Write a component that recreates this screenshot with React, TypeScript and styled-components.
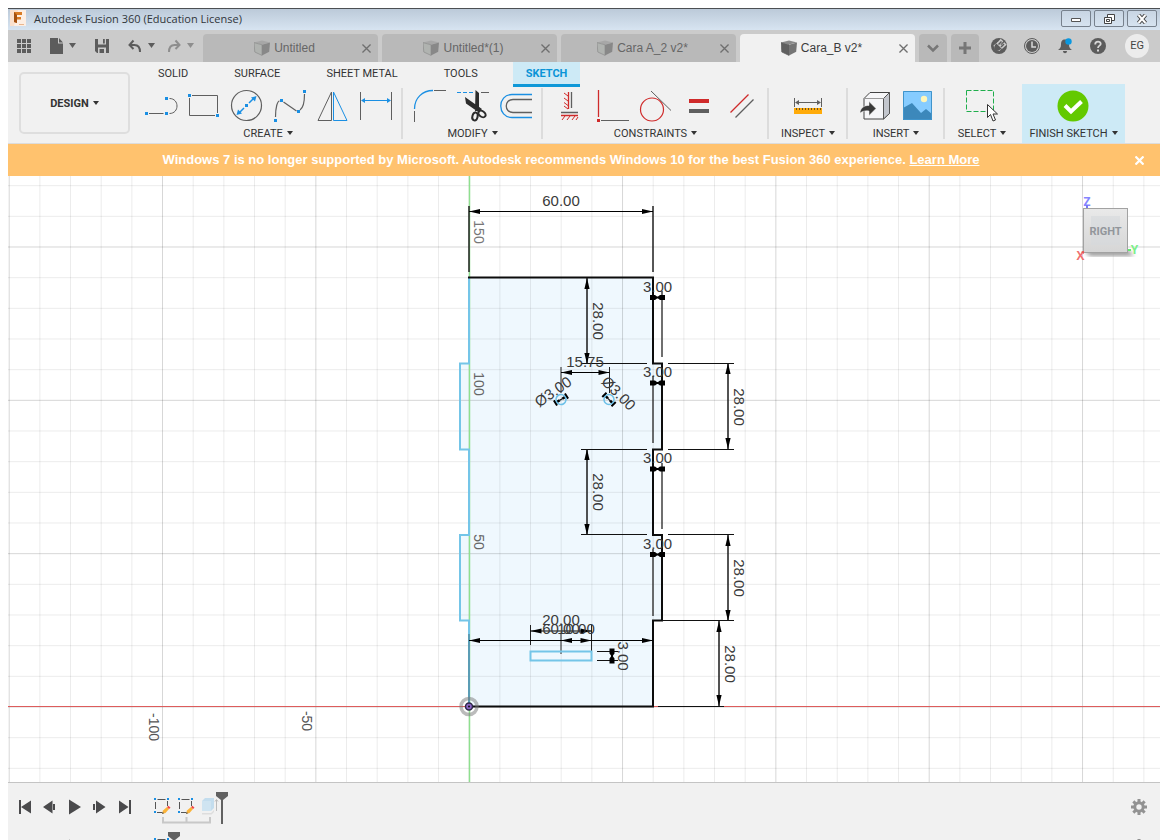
import React from 'react';
import styled, { createGlobalStyle } from 'styled-components';

const GlobalStyle = createGlobalStyle`
  *, *::before, *::after { box-sizing: border-box; }
  body { margin: 0; background: #fff; font-family: Roboto, "Liberation Sans", sans-serif; }
  button { font: inherit; color: inherit; background: none; border: 0; padding: 0; margin: 0; cursor: pointer; }
  svg { display: block; flex: none; }
`;

const Shell = styled.div`
  display: flex;
  flex-direction: column;
  height: 100vh;
  min-height: 640px;
  padding: 8px 8px 0;
`;

/* ---------- title bar ---------- */

const TitleBar = styled.header`
  display: flex;
  align-items: flex-start;
  gap: 8px;
  height: 22px;
  padding: 1px 3px 0 2px;
  border-top: 1px solid #4c4f53;
  background: linear-gradient(#bccad9, #d7e4f1);
`;

const Title = styled.h1`
  flex: 1;
  margin: 0;
  font: 400 11px/18px "Open Sans", "Noto Sans", sans-serif;
  color: #30353a;
`;

const WindowButtons = styled.div`
  display: flex;
  gap: 3px;
`;

const WindowButton = styled.button`
  display: grid;
  place-items: center;
  width: 30px;
  height: 17px;
  border: 1px solid #77818d;
  border-radius: 2px;
  background: linear-gradient(#c8d5e3, #d6e3f0);
`;

/* ---------- document tabs ---------- */

const TabBar = styled.div`
  display: flex;
  align-items: flex-end;
  height: 32px;
  background: #cbcbcb;
`;

const QuickAccess = styled.div`
  display: flex;
  align-self: stretch;
  width: 195px;
`;

const QuickButton = styled.button<{ $w: number }>`
  width: ${(p) => p.$w}px;
  height: 32px;
`;

const Tabs = styled.div`
  display: flex;
  gap: 4px;
`;

const Tab = styled.div<{ $active?: boolean }>`
  display: flex;
  align-items: center;
  width: 175px;
  height: 28px;
  padding-left: 11px;
  border-radius: 4px 4px 0 0;
  background: ${(p) => (p.$active ? '#f1f1f1' : '#b9b9b9')};
  color: ${(p) => (p.$active ? '#3c3c3c' : '#666')};
`;

const TabName = styled.button`
  display: flex;
  flex: 1;
  align-items: center;
  justify-content: center;
  gap: 4px;
  font: 400 12px/28px "Liberation Sans", sans-serif;
  white-space: nowrap;
`;

const TabClose = styled.button`
  display: grid;
  place-items: center;
  width: 23px;
  height: 28px;
  color: #6f6f6f;
`;

const SmallTab = styled.button`
  display: grid;
  place-items: center;
  width: 28px;
  height: 28px;
  border-radius: 4px 4px 0 0;
  background: #b9b9b9;
`;

const Account = styled.div`
  display: flex;
  align-items: center;
  align-self: stretch;
  flex: 1;
  justify-content: flex-end;
  padding-right: 11px;
`;

const AccountButton = styled.button`
  display: grid;
  place-items: center;
  width: 33px;
  height: 32px;
`;

const Avatar = styled.button`
  width: 24px;
  height: 24px;
  margin-left: 11px;
  border-radius: 50%;
  background: #ececec;
  font-size: 11px;
  line-height: 24px;
  color: #444;
`;

/* ---------- ribbon ---------- */

const Ribbon = styled.div`
  display: flex;
  align-items: flex-start;
  height: 82px;
  border-bottom: 1px solid #dcdcdc;
  background: #f1f1f1;
  font-size: 11px;
  color: #333;
`;

const Workspace = styled.button`
  width: 111px;
  height: 62px;
  margin: 10px 4px 0 11px;
  border: 2px solid #dedede;
  border-radius: 5px;
  font-weight: 700;
`;

const Caret = styled.i`
  display: inline-block;
  margin-left: 4px;
  border: 3px solid transparent;
  border-top: 4px solid currentColor;
  border-bottom: 0;
  vertical-align: 2px;
`;

const RibbonBody = styled.div`
  display: flex;
  flex-direction: column;
`;

const RibbonTabs = styled.nav`
  display: flex;
  align-items: flex-start;
  height: 22px;
  padding-left: 1px;
`;

const RibbonTab = styled.button<{ $active?: boolean }>`
  height: ${(p) => (p.$active ? 25 : 22)}px;
  margin-left: ${(p) => (p.$active ? 12 : 0)}px;
  padding: 1px ${(p) => (p.$active ? 13 : 23)}px 0;
  border-bottom: ${(p) => (p.$active ? '3px solid #0e98d8' : '0')};
  background: ${(p) => (p.$active ? '#cdeaf6' : 'none')};
  color: ${(p) => (p.$active ? '#0a94d6' : '#333')};
  font-weight: ${(p) => (p.$active ? 700 : 400)};
  line-height: 21px;
  white-space: nowrap;
`;

const Groups = styled.div`
  display: flex;
  height: 59px;
`;

const Group = styled.section`
  padding: 3px 4px 0 5px;
`;

const Tools = styled.div`
  display: flex;
  height: 37px;
`;

const GroupLabel = styled.button`
  display: block;
  width: 100%;
  padding-top: 1px;
  line-height: 18px;
  white-space: nowrap;
`;

const Divider = styled.span`
  width: 2px;
  margin: 4px 0;
  background: #dcdcdc;
`;

const FinishGroup = styled(Group)`
  margin-left: 4px;
  padding: 3px 0 0;
  background: #cdeaf6;
`;

/* ---------- notice ---------- */

const Notice = styled.div`
  display: flex;
  align-items: center;
  height: 32px;
  background: #ffc26e;
  color: #fff;
  font: 700 13px/32px "Liberation Sans", Arial, sans-serif;
`;

const NoticeText = styled.p`
  flex: 1;
  margin: 0;
  padding-left: 16px;
  text-align: center;
  white-space: nowrap;
  a { color: inherit; }
`;

const NoticeClose = styled.button`
  display: grid;
  place-items: center;
  width: 42px;
  height: 32px;
`;

/* ---------- canvas ---------- */

const Canvas = styled.main`
  position: relative;
  flex: 1;
  min-height: 0;
  background: #fff;
  > svg { width: 100%; height: 100%; }
`;

const ViewCube = styled.button`
  position: absolute;
  top: 16px;
  right: 18px;
`;

/* ---------- timeline ---------- */

const Timeline = styled.footer`
  height: 58px;
  overflow: hidden;
  border-top: 1px solid #c4c4c4;
  background: #f1f1f1;
`;

const TimelineRow = styled.div`
  display: flex;
  height: 40px;
  padding: 0 9px 0 4px;
`;

const PlayButton = styled.button`
  display: grid;
  place-items: center;
  width: 25px;
  height: 48px;
`;

const History = styled.div`
  flex: 1;
  padding: 6px 0 0 17px;
`;

const Settings = styled.button`
  display: grid;
  place-items: center;
  width: 24px;
  height: 48px;
`;

const G = '#5f5f5f';
const B = '#1a8fe3';
const R = '#cf2a2a';

function ToolButton({ x, w = 43, label, children }: { x: number; w?: number; label: string; children: React.ReactNode }) {
  return (
    <button aria-label={label} title={label}>
      <svg width={w} height={36} viewBox={`${x} 87 ${w} 36`} fill="none" stroke={G} strokeWidth={1}>
        {children}
      </svg>
    </button>
  );
}

const Dot = ({ x, y, c = B }: { x: number; y: number; c?: string }) => (
  <rect x={x - 1.5} y={y - 1.5} width={3} height={3} fill={c} stroke="none" />
);

function CubeIcon({ dark }: { dark?: boolean }) {
  return (
    <svg width={16} height={16} viewBox="0 0 16 16">
      <path d="M0 2.6 8 .4l8 2.2-8 2z" fill={dark ? '#8a8a8a' : '#a7a7a7'} />
      <path d="M0 2.6 8 4.8v10.6L.8 12z" fill={dark ? '#606060' : '#b0b3b0'} stroke={dark ? '#606060' : '#8c8c8c'} strokeWidth=".7" />
      <path d="M8 4.8 16 2.6l-.8 9.2L8 15.4z" fill={dark ? '#757575' : '#888'} />
    </svg>
  );
}

const Cross = ({ s = 8, w = 1.4 }: { s?: number; w?: number }) => (
  <svg width={s} height={s} viewBox="0 0 8 8" stroke="currentColor" strokeWidth={w}>
    <path d="M.4.4l7.2 7.2M7.6.4.4 7.6" />
  </svg>
);

function DocTab({ name, active }: { name: string; active?: boolean }) {
  return (
    <Tab $active={active}>
      <TabName><CubeIcon dark={active} />{name}</TabName>
      <TabClose aria-label={`Close ${name}`}><Cross s={9} w={1.2} /></TabClose>
    </Tab>
  );
}

function QuickAccessBar() {
  return (
    <QuickAccess>
      <QuickButton $w={34} aria-label="Data panel">
        <svg width={34} height={32} viewBox="8 30 34 32" fill="#5c5c5c">
          {[17, 22, 27].map((x) => [39, 44, 49].map((y) => <rect key={`${x}${y}`} x={x} y={y} width={4} height={4} />))}
        </svg>
      </QuickButton>
      <QuickButton $w={44} aria-label="File">
        <svg width={44} height={32} viewBox="42 30 44 32" fill="#5c5c5c">
          <path d="M50 38h8v5.500h5V54H50zM59 38l4 4.500h-4zM69 43h7l-3.500 5z" />
        </svg>
      </QuickButton>
      <QuickButton $w={34} aria-label="Save">
        <svg width={34} height={32} viewBox="86 30 34 32">
          <path d="M95 39h14v14H97l-2-2z" fill="#5c5c5c" />
          <path d="M98 39h8v5.500h-8z" fill="#cbcbcb" />
          <path d="M103 39h1.800v4.500H103z" fill="#5c5c5c" />
          <path d="M98 47.500h8V53h-8z" fill="#cbcbcb" />
          <path d="M99.500 49h4.500v4h-4.500z" fill="#5c5c5c" />
        </svg>
      </QuickButton>
      <QuickButton $w={42} aria-label="Undo">
        <svg width={42} height={32} viewBox="120 30 42 32">
          <path d="M133.500 40.500 129.500 45l4 4M130 45h4.500c4 0 5.500 2.500 5.500 7" fill="none" stroke="#5c5c5c" strokeWidth="2" />
          <path d="M148 43h7l-3.500 5z" fill="#5c5c5c" />
        </svg>
      </QuickButton>
      <QuickButton $w={41} aria-label="Redo">
        <svg width={41} height={32} viewBox="162 30 41 32">
          <path d="M175.500 40.500 179.500 45l-4 4M179 45h-4.500c-4 0-5.500 2.500-5.500 7" fill="none" stroke="#8e8e8e" strokeWidth="2" />
          <path d="M187 43h7l-3.500 5z" fill="#8e8e8e" />
        </svg>
      </QuickButton>
    </QuickAccess>
  );
}

function CreateTools() {
  return (
    <Tools>
      <ToolButton x={139} label="Line">
        <path d="M149 112.500h14.500M169.500 97.500c10 0 10 15 0 15" />
        <Dot x={146.500} y={112.500} /><Dot x={166.500} y={112.500} /><Dot x={166.500} y={97.500} />
      </ToolButton>
      <ToolButton x={182} label="Rectangle">
        <path d="M192 94.500h25.500V112M215 114.500h-25.500V97" />
        <Dot x={189.500} y={94.500} /><Dot x={217.500} y={114.500} />
      </ToolButton>
      <ToolButton x={225} label="Circle">
        <circle cx={246.500} cy={104.500} r={15} strokeWidth="1.200" />
        <g fill={B}><path d="M249 102l5-5M244 107l-5 5" stroke={B} strokeWidth="1.500" /><path d="M256.500 95l-1.500 5.500-4-4zM236.500 114l1.500-5.500 4 4z" stroke="none" /></g>
        <Dot x={246.500} y={104.500} />
      </ToolButton>
      <ToolButton x={268} label="Spline">
        <path d="M275.500 116c0-10 2-16 4-16M283.500 101l13 9M300 109c3-2 4.500-8 4.500-16" strokeWidth="1.200" />
        <Dot x={275.500} y={119.500} /><Dot x={281.500} y={99.500} /><Dot x={298.500} y={110.500} /><Dot x={304.500} y={90.500} />
      </ToolButton>
      <ToolButton x={311} label="Mirror">
        <path d="M331.500 91v28.500H318z" />
        <path d="M333.500 91v28.500H347z" stroke={B} />
      </ToolButton>
      <ToolButton x={354} label="Sketch dimension">
        <path d="M360.500 91v28M391.500 91v28" />
        <path d="M363 99.500h26" stroke={B} />
        <path d="M361 99.500l4-2.500v5zM391 99.500l-4-2.500v5z" fill={B} stroke="none" />
      </ToolButton>
    </Tools>
  );
}

function ModifyTools() {
  return (
    <Tools>
      <ToolButton x={408} label="Fillet">
        <path d="M414.500 121v-11M434 89.500h12" />
        <path d="M414.500 108c0-11 8-18.500 18.500-18.500" stroke={B} strokeWidth="1.300" />
      </ToolButton>
      <ToolButton x={451} label="Trim">
        <path d="M457 91.500h16" stroke={B} strokeDasharray="4 2" /><path d="M481 91.500h8" />
        <path d="M475.500 89l3.500 3v17l-4 1.500zM465 96l17 12-3 3.500-13-9z" fill="#2c2c2c" stroke="none" />
        <g stroke="#2c2c2c" strokeWidth="2"><ellipse cx={475} cy={115.500} rx={2.600} ry={4} transform="rotate(15 475 115.500)" /><ellipse cx={482} cy={113} rx={4} ry={2.800} transform="rotate(35 482 113)" /></g>
      </ToolButton>
      <ToolButton x={494} label="Offset">
        <path d="M532 93.500h-20c-15 0-15 23 0 23h20" stroke={B} strokeWidth="1.300" />
        <path d="M532 98.500h-19c-9 0-9 13 0 13h19" strokeWidth="1.300" />
      </ToolButton>
    </Tools>
  );
}

function ConstraintTools() {
  return (
    <Tools>
      <ToolButton x={548} label="Horizontal/Vertical">
        <path d="M571.500 91v16M561 111.500h17" strokeWidth="1.300" />
        <path d="M568.500 91v17M561 114.500h17" stroke={R} strokeWidth="1.300" />
        <path d="M568 95l-4-3M568 100l-4-3M568 104.500l-4-3M568 108l-4-3M565 115l-3 4M570 115l-3 4M575 115l-3 4M578 116l-2 3" stroke={R} />
      </ToolButton>
      <ToolButton x={591} label="Coincident">
        <path d="M598.500 89v27" stroke={R} strokeWidth="1.300" /><path d="M601 119.500h28" /><Dot x={598.500} y={119.500} c={R} />
      </ToolButton>
      <ToolButton x={634} label="Tangent">
        <circle cx={652} cy={108.500} r={11.500} stroke={R} strokeWidth="1.200" /><path d="M651 90l20 19.500" />
      </ToolButton>
      <ToolButton x={677} label="Equal">
        <path d="M689 100h20" stroke={R} strokeWidth="4" /><path d="M689 110h20" strokeWidth="4" />
      </ToolButton>
      <ToolButton x={720} label="Parallel">
        <path d="M730.500 111.500 748.500 93.500" stroke={R} strokeWidth="1.300" /><path d="M735.500 116.500l18-18" strokeWidth="1.300" />
      </ToolButton>
    </Tools>
  );
}

function InsertTools() {
  return (
    <Tools>
      <ToolButton x={853} label="Insert derive">
        <path d="M864 97.500l6-6h19.500v21l-6 5.500H864z" fill="#f6f6f8" stroke="#444" />
        <path d="M883.500 97.500l6-6v21l-6 5.500z" fill="#c3c6cd" stroke="#555" /><path d="M864 97.500h19.500" stroke="#999" />
        <path d="M860 112c0-5 5-8 9-7.500v-4l7 7-7 7V110c-4-.5-6 0-9 2z" fill="#3a3a3a" stroke="#f1f1f1" strokeWidth=".5" />
      </ToolButton>
      <ToolButton x={896} label="Insert image">
        <rect x={903} y={90} width={29} height={29} fill="#86ccff" stroke="none" />
        <path d="M903 107l9-5 9 10 5-4 6 5v6h-29z" fill="#3c88bb" stroke="none" />
        <circle cx={924} cy={98} r={3.200} fill="#fff6b8" stroke="none" />
        <path d="M903.500 90.500h28v28h-28z" stroke="#4094cb" />
      </ToolButton>
    </Tools>
  );
}

function RibbonGroups() {
  return (
    <Groups>
      <Group><CreateTools /><GroupLabel>CREATE<Caret /></GroupLabel></Group>
      <Divider />
      <Group><ModifyTools /><GroupLabel>MODIFY<Caret /></GroupLabel></Group>
      <Divider />
      <Group><ConstraintTools /><GroupLabel>CONSTRAINTS<Caret /></GroupLabel></Group>
      <Divider />
      <Group>
        <Tools>
          <ToolButton x={774} w={68} label="Measure">
            <path d="M794.500 97v9M821.500 97v9M796 101.500h24" />
            <path d="M795 101.500l4-2.500v5zM821 101.500l-4-2.500v5z" fill={G} stroke="none" />
            <rect x={794} y={107} width={28} height={6} fill="#ffab09" stroke="none" />
            <path d="M796.500 107v2M799.500 107v2M802.500 107v2M805.500 107v2M808.500 107v2M811.500 107v2M814.500 107v2M817.500 107v2M820.500 107v2" stroke="#6d5320" />
          </ToolButton>
        </Tools>
        <GroupLabel>INSPECT<Caret /></GroupLabel>
      </Group>
      <Divider />
      <Group><InsertTools /><GroupLabel>INSERT<Caret /></GroupLabel></Group>
      <Divider />
      <Group>
        <Tools>
          <ToolButton x={950} w={64} label="Select">
            <path d="M966.500 89.500h27v21h-27z" stroke="#1fae4c" strokeDasharray="5 2" />
            <path d="M987.500 103.500v13l3-3 2.500 6.500 2.500-1-2.500-6h4.500z" fill="#fff" stroke="#333" />
          </ToolButton>
        </Tools>
        <GroupLabel>SELECT<Caret /></GroupLabel>
      </Group>
      <FinishGroup>
        <Tools>
          <ToolButton x={1022} w={103} label="Finish sketch">
            <circle cx={1073} cy={105} r={15.500} fill="#63c900" stroke="none" />
            <path d="M1065 104.500l6 6 10.500-10" stroke="#fff" strokeWidth="4" />
          </ToolButton>
        </Tools>
        <GroupLabel>FINISH SKETCH<Caret /></GroupLabel>
      </FinishGroup>
    </Groups>
  );
}

/* ---------- sketch drawing ---------- */

const Head = ({ x, y, a }: { x: number; y: number; a: number }) => (
  <path d="M0 0l11-2.600v5.200z" fill="#000" transform={`translate(${x} ${y}) rotate(${a})`} />
);

const Label = ({ x, y, a = 0, s = 15, c = '#3a3a3a', children }: { x: number; y: number; a?: number; s?: number; c?: string; children: string }) => (
  <text transform={`translate(${x} ${y}) rotate(${a})`} fontSize={s} fill={c} textAnchor="middle">{children}</text>
);

const HDim = ({ x1, x2, y }: { x1: number; x2: number; y: number }) => (
  <g><path d={`M${x1} ${y}H${x2}`} stroke="#000" /><Head x={x1} y={y} a={0} /><Head x={x2} y={y} a={180} /></g>
);

const VDim = ({ x, y1, y2 }: { x: number; y1: number; y2: number }) => (
  <g><path d={`M${x} ${y1}V${y2}`} stroke="#1a1a1a" strokeWidth={1.500} /><Head x={x} y={y1} a={90} /><Head x={x} y={y2} a={-90} /></g>
);

const TinyDim = ({ x, y, a = 0 }: { x: number; y: number; a?: number }) => (
  <path d="M-7.500-2.500h5l2 1.500h1l2-1.500h5v5h-5l-2-1.500h-1l-2 1.500h-5z" fill="#000" transform={`translate(${x} ${y}) rotate(${a})`} />
);

const STEP = 30.667;
const OUTLINE = 'M469 277.500H653V363.500H662V449.500H653V535H662V620.500H653V706.500H469V620.500H460V535H469V449.500H460V363.500H469z';

function SketchView() {
  const cols = Array.from({ length: 61 }, (_, i) => i - 25);
  const rows = Array.from({ length: 45 }, (_, i) => i - 15);
  return (
    <svg viewBox="8 176 1152 606" preserveAspectRatio="xMidYMid slice" fontFamily='"Liberation Sans", Arial, sans-serif' fill="none" role="img" aria-label="Sketch of Cara_B">
      <path d={OUTLINE} fill="#eff8fe" />
      {cols.map((i) => (
        <path key={i} d={`M${469.2 + i * STEP} -400V1400`} stroke="#000" strokeOpacity={i % 5 ? 0.08 : 0.16} />
      ))}
      {rows.map((i) => (
        <path key={i} d={`M-400 ${707 - i * STEP}H1600`} stroke="#000" strokeOpacity={i % 5 ? 0.08 : 0.16} />
      ))}
      <path d="M469.500-400V1400" stroke="#8fe08f" strokeWidth={1.500} />
      <path d="M-400 706.500H1600" stroke="#dd5c5c" />

      <path d="M469 277V363.500H460V449.500H469V535H460V620.500H469V640" stroke="#74c5e8" strokeWidth={2} />
      <path d="M469 634V706" stroke="#5b9db5" strokeWidth={2} />
      <path d="M468 277.500H653V363.500H662V449.500H653V535H662V620.500H653V706.500H469" stroke="#0c0c0c" strokeWidth={2} />
      <path d="M662 291v66M662 463v66M653 376v67M653 549v67" stroke="#333" strokeWidth={1.400} />

      <path d="M469 206v66M653 206v66" stroke="#222" strokeWidth={1.500} />
      <HDim x1={469} x2={653} y={211.5} />
      <Label x={561} y={206}>60.00</Label>

      {[297.5, 383, 469, 554.5].map((y) => (
        <g key={y}><TinyDim x={657.5} y={y} /><Label x={657.5} y={y - 6}>3.00</Label></g>
      ))}

      <path d="M581 363.500h66M581 449.500h66M581 534.500h66M668 363.500h66M668 449.500h66M668 534.500h66M662 620.500h72M658 706.500h66" stroke="#111" />
      <VDim x={587} y1={278} y2={364} /><Label x={593} y={321} a={90}>28.00</Label>
      <VDim x={587} y1={449} y2={535} /><Label x={593} y={492} a={90}>28.00</Label>
      <VDim x={728} y1={363} y2={449} /><Label x={734} y={407} a={90}>28.00</Label>
      <VDim x={728} y1={535} y2={621} /><Label x={734} y={578} a={90}>28.00</Label>
      <VDim x={719} y1={621} y2={706} /><Label x={725} y={664} a={90}>28.00</Label>

      <path d="M561 367v26M609.500 367v26" stroke="#222" />
      <HDim x1={561} x2={609.5} y={372.5} /><Label x={585} y={367}>15.75</Label>
      <Label x={556} y={396} a={-35}>Ø3.00</Label>
      <Label x={615} y={397} a={45}>Ø3.00</Label>
      {[[561, -32], [609, 45]].map(([x, a]) => (
        <g key={x} transform={`translate(${x} 399.500) rotate(${a})`}>
          <path d="M-5.500 0h4M1.500 0h4" stroke="#000" strokeWidth={2.500} />
          <path d="M-1.500 0h3" stroke="#000" />
          <path d="M-6.500-3v6M6.500-3v6" stroke="#000" strokeWidth={2} />
          <circle r={5} stroke="#6cc0e8" strokeWidth={1.500} />
        </g>
      ))}

      <path d="M530.500 625v20M591.500 625v26M561 634v20" stroke="#222" />
      <HDim x1={530.5} x2={591.5} y={631} /><Label x={561} y={625}>20.00</Label>
      <HDim x1={469} x2={653} y={640.5} /><Label x={561} y={634}>60.00</Label>
      <HDim x1={561} x2={591.5} y={640.5} /><Label x={576} y={634}>10.00</Label>
      <path d="M530.500 651.500h61v9h-61z" stroke="#74c5e8" strokeWidth={2} />
      <path d="M597 651.500h21M597 660.500h21" stroke="#111" /><TinyDim x={612} y={656} a={90} />
      <Label x={618} y={656} a={90}>3.00</Label>

      <Label x={474} y={232} a={90} s={14} c="#777">150</Label>
      <Label x={474} y={384} a={90} s={14} c="#666">100</Label>
      <Label x={474} y={542} a={90} s={14} c="#666">50</Label>
      <Label x={149} y={727} a={90} s={14} c="#555">-100</Label>
      <Label x={302} y={721} a={90} s={14} c="#555">-50</Label>

      <circle cx={469} cy={706.500} r={8} stroke="#777" strokeOpacity={0.5} strokeWidth={3.500} />
      <circle cx={469} cy={706.500} r={3.500} fill="#8d68c8" stroke="#2e2848" strokeWidth={1.500} /><circle cx={469} cy={706.500} r={1} fill="#111" />
    </svg>
  );
}

function Cube() {
  return (
    <svg width={68} height={76} viewBox="1074 192 68 76" fontFamily='"Open Sans", sans-serif'>
      <defs>
        <linearGradient id="face" x1="0" y1="0" x2="0" y2="1"><stop offset="0" stopColor="#e9e9e9" /><stop offset="1" stopColor="#d6d6d6" /></linearGradient>
        <filter id="soft"><feGaussianBlur stdDeviation="2" /></filter>
      </defs>
      <path d="M1084 250h44l6 6h-44z" fill="#999" filter="url(#soft)" />
      <rect x={1083.500} y={208.500} width={44} height={44} fill="url(#face)" stroke="#a2a2a2" />
      <rect x={1091} y={216} width={29} height={29} fill="#d5d8dc" opacity=".6" />
      <text x={1105.500} y={235} textAnchor="middle" fontSize={11} fontWeight={700} fill="#92969b" fontFamily="Roboto, sans-serif">RIGHT</text>
      <text x={1087} y={206} textAnchor="middle" fontSize={12} fontWeight={700} fill="#8585ff">Z</text>
      <text x={1134.500} y={254} textAnchor="middle" fontSize={12} fontWeight={700} fill="#7df08a">Y</text>
      <text x={1080.500} y={260} textAnchor="middle" fontSize={12} fontWeight={700} fill="#f07070">X</text>
      <path d="M1128 249h3v2h-3z" fill="#5fef6d" /><path d="M1086 205h2v3h-2z" fill="#7777f5" /><path d="M1081 252l3-1v3z" fill="#e05555" />
    </svg>
  );
}

/* ---------- timeline ---------- */

const playPaths: [string, string][] = [
  ['Go to start', 'M3 2h2v14H3zM5 9 15 2.500v13z'],
  ['Step back', 'M2 9l9.500-6.500v13zM12 6h2v6h-2z'],
  ['Play', 'M3 1.500 15 9 3 16.500z'],
  ['Step forward', 'M2 6h2v6H2zM5 2.500 14.500 9 5 15.500z'],
  ['Go to end', 'M3 2.500 12.500 9 3 15.500zM13 2h2v14h-2z'],
];

const SketchFeature = ({ x }: { x: number }) => (
  <g transform={`translate(${x} 9)`}>
    <path d="M3.500 1.500h8M1.500 4v7M3 14.500h5M13.500 3v5" stroke="#555" fill="none" />
    {[[1, 1], [14, 1], [1, 14]].map(([a, b]) => <rect key={`${a}-${b}`} x={a - 1} y={b - 1} width={2} height={2} fill={B} />)}
    <path d="M8 16l1-3.500 4-3.500 2 2-3.500 4z" fill="#fbb338" /><path d="M13 9l1.500-1.200 2 2L15 11z" fill="#f34545" /><path d="M8 16l.6-2.200 1.400 1.400z" fill="#555" />
  </g>
);

const Marker = ({ x, y = 0 }: { x: number; y?: number }) => (
  <path transform={`translate(${x} ${y})`} d="M0 3h12v4L7 11v24H5V11L0 7z" fill="#616161" />
);

function TimelineControls({ full }: { full?: boolean }) {
  return (
    <TimelineRow>
      {playPaths.map(([label, d]) => (
        <PlayButton key={label} aria-label={label}><svg width={18} height={18} viewBox="0 0 18 18" fill="#4a4a4c"><path d={d} /></svg></PlayButton>
      ))}
      <History>
        <svg width={78} height={40} viewBox="0 0 78 40">
          <SketchFeature x={0} />
          {full && (
            <>
              <SketchFeature x={24} />
              <path d="M48 12l3-3h9v10l-3 3h-9z" fill="#c3ddee" /><path d="M48 12h9v10h-9z" fill="#cfe4f1" />
              <path d="M48 24h9l3-3v2l-2.500 2.500H48z" fill="#ddd" /><path d="M62.500 22V11M61 12.500l1.500-2 1.500 2" stroke="#bbb" fill="none" />
              <path d="M9 28v5.500h47V28M32.500 28v5" stroke="#c8c8c8" strokeWidth="2" fill="none" />
            </>
          )}
          <Marker x={full ? 62 : 14} />
        </svg>
      </History>
      <Settings aria-label="Timeline settings">
        <svg width={16} height={16} viewBox="-8 -8 16 16" fill="none" stroke="#929292">
          <circle r={4.200} strokeWidth={3} />
          {[0, 45, 90, 135].map((a) => <path key={a} d="M0-8v3M0 5v3" strokeWidth={3} transform={`rotate(${a})`} />)}
        </svg>
      </Settings>
    </TimelineRow>
  );
}

export default function App() {
  return (
    <>
      <GlobalStyle />
      <Shell>
        <TitleBar>
          <svg width={16} height={16} viewBox="0 0 16 16">
            <rect width={16} height={16} fill="#fbe0cc" /><path d="M8 0h8v16H4z" fill="#fff" opacity=".45" />
            <path d="M4 2h8v3H7v2h4v2.500H7V13l-3-1z" fill="#d97b24" /><path d="M4 2l3 3v8l-3-1z" fill="#a3500f" /><path d="M9 14h5v1H9z" fill="#eab68e" />
          </svg>
          <Title>Autodesk Fusion 360 (Education License)</Title>
          <WindowButtons>
            <WindowButton aria-label="Minimize"><svg width={12} height={10}><path d="M1.500 4.500h9v3h-9z" fill="#fff" stroke="#555" /></svg></WindowButton>
            <WindowButton aria-label="Restore"><svg width={12} height={12} fill="#fff" stroke="#444"><path d="M4.500 1.500h7v6h-7z" /><path d="M1.500 4.500h7v6h-7z" /><path d="M3.500 6.500h3v2h-3z" /></svg></WindowButton>
            <WindowButton aria-label="Close"><svg width={12} height={10}><path d="M2.500 1l7 8M9.500 1l-7 8" stroke="#444" strokeWidth="4" /><path d="M2.500 1l7 8M9.500 1l-7 8" stroke="#fff" strokeWidth="2" /></svg></WindowButton>
          </WindowButtons>
        </TitleBar>

        <TabBar>
          <QuickAccessBar />
          <Tabs>
            <DocTab name="Untitled" />
            <DocTab name="Untitled*(1)" />
            <DocTab name="Cara A_2 v2*" />
            <DocTab name="Cara_B v2*" active />
            <SmallTab aria-label="All tabs"><svg width={14} height={10} fill="none" stroke="#777" strokeWidth="2.500"><path d="M2 2.500l5 5 5-5" /></svg></SmallTab>
            <SmallTab aria-label="New tab"><svg width={14} height={14} stroke="#777" strokeWidth="3"><path d="M7 1v12M1 7h12" /></svg></SmallTab>
          </Tabs>
          <Account>
            <AccountButton aria-label="Extensions">
              <svg width={18} height={18} fill="none">
                <circle cx={9} cy={9} r={8} fill="#5c5c5c" />
                <path d="M5 13l-1.500-4.500L8 5l5 5-3.500 4z" fill="#cbcbcb" />
                <path d="M4.500 13.500c-1-3 0-5.500 2-7l5 5c-2 2-4.500 3-7 2z" fill="#5c5c5c" />
                <path d="M8 7.500 12 3M11 10.500 15.500 6.500" stroke="#cbcbcb" strokeWidth="3.500" />
                <path d="M8.500 7.500l3-3M11 10l3-3" stroke="#5c5c5c" strokeWidth="1.500" />
              </svg>
            </AccountButton>
            <AccountButton aria-label="Job status">
              <svg width={18} height={18} fill="none"><circle cx={9} cy={9} r={7.500} stroke="#5c5c5c" /><circle cx={9} cy={9} r={6} fill="#5c5c5c" /><path d="M9 4.500V10h4" stroke="#d8d8d8" strokeWidth="1.500" /></svg>
            </AccountButton>
            <AccountButton aria-label="Notifications">
              <svg width={18} height={18} fill="#5c5c5c"><path d="M9 2.500c-3 0-4 2-4 5 0 3-1 4-3 5.500h14c-2-1.500-3-2.500-3-5.500 0-3-1-5-4-5zM7 14h4c0 3-4 3-4 0z" /><circle cx={12.500} cy={4.500} r={3.200} fill="#0a98e0" /></svg>
            </AccountButton>
            <AccountButton aria-label="Help">
              <svg width={18} height={18} fill="none"><circle cx={9} cy={9} r={8} fill="#5c5c5c" /><path d="M6.200 7.500c0-4 5.800-3.500 5.500-.5-.2 1.700-2.700 1.700-2.700 4" stroke="#d8d8d8" strokeWidth="1.800" /><path d="M8 12.500h2v2H8z" fill="#d8d8d8" /></svg>
            </AccountButton>
            <Avatar>EG</Avatar>
          </Account>
        </TabBar>

        <Ribbon>
          <Workspace>DESIGN<Caret /></Workspace>
          <RibbonBody>
            <RibbonTabs>
              <RibbonTab>SOLID</RibbonTab>
              <RibbonTab>SURFACE</RibbonTab>
              <RibbonTab>SHEET METAL</RibbonTab>
              <RibbonTab>TOOLS</RibbonTab>
              <RibbonTab $active>SKETCH</RibbonTab>
            </RibbonTabs>
            <RibbonGroups />
          </RibbonBody>
        </Ribbon>

        <Notice role="status">
          <NoticeText>
            Windows 7 is no longer supported by Microsoft. Autodesk recommends Windows 10 for the best Fusion 360 experience. <a href="#learn-more">Learn More</a>
          </NoticeText>
          <NoticeClose aria-label="Dismiss"><Cross s={9} w={2} /></NoticeClose>
        </Notice>

        <Canvas>
          <SketchView />
          <ViewCube aria-label="View cube, right"><Cube /></ViewCube>
        </Canvas>

        <Timeline>
          <TimelineControls full />
          <TimelineControls />
        </Timeline>
      </Shell>
    </>
  );
}
